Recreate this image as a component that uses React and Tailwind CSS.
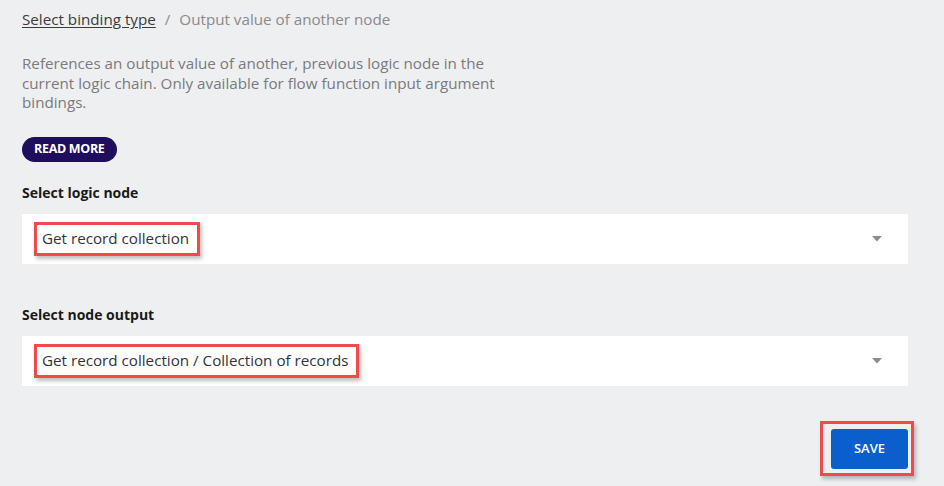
import React from 'react';

function Highlight({ children }) {
  return (
    <span className="inline-flex h-[34px] items-center border-[3px] border-[#f04a4a] pl-[5px] pr-[8px] shadow-[2px_3px_4px_rgba(0,0,0,0.25)]">
      {children}
    </span>
  );
}

function SelectBox({ value }) {
  return (
    <div className="flex h-[50px] w-full items-center justify-between bg-white pl-3 pr-[26px]">
      <Highlight>{value}</Highlight>
      <svg width="10" height="6" viewBox="0 0 10 6" className="mt-[1px]">
        <path d="M0 0h10L5 5.5z" fill="#8c8c8c" />
      </svg>
    </div>
  );
}

export default function App() {
  return (
    <div className="min-h-[486px] w-[944px] bg-[#eeeff1] pl-[22px] pr-[36px] pt-[9px] font-['Open_Sans',sans-serif] text-[15.2px]">
      {/* Breadcrumb */}
      <div className="flex items-center gap-[9px] leading-5 text-[#8a8a8c]">
        <span className="text-[#3b3b3b] underline underline-offset-2">Select binding type</span>
        <span>/</span>
        <span>Output value of another node</span>
      </div>

      {/* Description */}
      <p className="mt-[25px] w-[500px] leading-[19.5px] text-[#7a7a7e]">
        References an output value of another, previous logic node in the current logic chain. Only available for flow function input argument bindings.
      </p>

      <button className="mt-[24px] flex h-[25px] items-center rounded-full bg-[#1f0d5e] px-[12px] text-[12.5px] font-bold tracking-tight text-white">
        READ MORE
      </button>

      {/* Logic node */}
      <div className="mt-[22px] text-[14px] font-bold leading-[18px] text-[#1a1a1a]">Select logic node</div>
      <div className="mt-[12px] text-[#333336]">
        <SelectBox value="Get record collection" />
      </div>

      {/* Node output */}
      <div className="mt-[42px] text-[14px] font-bold leading-[18px] text-[#1a1a1a]">Select node output</div>
      <div className="mt-[12px] text-[#333336]">
        <SelectBox value="Get record collection / Collection of records" />
      </div>

      <div className="mt-[35px] flex justify-end">
        <div className="-mr-[6px] border-[3px] border-[#f04a4a] pb-[4px] pl-[8px] pr-[3px] pt-[5px] shadow-[2px_3px_4px_rgba(0,0,0,0.25)]">
          <button className="flex h-[40px] w-[77px] items-center justify-center rounded-[3px] bg-[#0b5fcc] text-[13px] font-semibold text-white">
            SAVE
          </button>
        </div>
      </div>
    </div>
  );
}
